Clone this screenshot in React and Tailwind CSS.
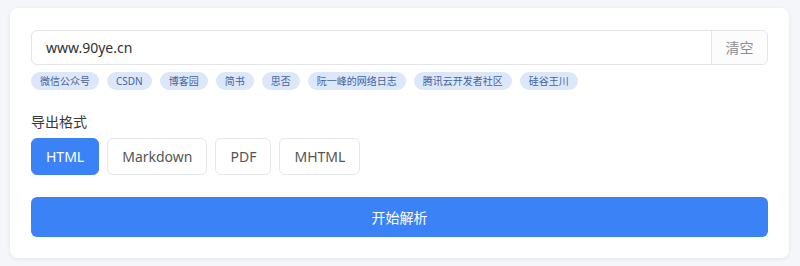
const TAGS = ['微信公众号', 'CSDN', '博客园', '简书', '思否', '阮一峰的网络日志', '腾讯云开发者社区', '硅谷王川']
const FORMATS = ['HTML', 'Markdown', 'PDF', 'MHTML']

export default function App() {
  const font = { fontFamily: '"Noto Sans", "Noto Sans CJK SC", sans-serif' }
  return (
    <div className="min-h-screen bg-[#f4f6f9] pl-[10px] pr-[11px] pt-[8px] pb-[8px]" style={font}>
      <div className="bg-white rounded-lg shadow-[0_1px_4px_rgba(0,0,0,0.08)] px-[21px] pt-[22px] pb-[21px]">
        {/* 地址输入 */}
        <div className="flex h-[35px] border border-[#e2e4e8] rounded-md overflow-hidden">
          <div className="flex-1 flex items-center px-[14px] text-[14px] text-[#303133]">www.90ye.cn</div>
          <button className="w-[56px] border-l border-[#e2e4e8] bg-[#fcfcfc] text-[14px] text-[#8a8e96]">清空</button>
        </div>

        {/* 来源标签 */}
        <div className="mt-[7px] flex flex-wrap gap-[8px]">
          {TAGS.map(t => (
            <span key={t} className="h-[18px] px-[9px] flex items-center rounded-full bg-[#dce8fa] text-[10px] text-[#46639a]">{t}</span>
          ))}
        </div>

        {/* 导出格式 */}
        <div className="mt-[22px] text-[14px] leading-[20px] text-[#3a3a3a]">导出格式</div>
        <div className="mt-[6px] flex gap-[8px]">
          {FORMATS.map((f, i) => (
            <button
              key={f}
              className={i === 0
                ? 'h-[37px] px-[14px] rounded-md bg-[#3b82f6] text-white text-[14px] border border-[#3b82f6]'
                : 'h-[37px] px-[14px] rounded-md bg-white text-[#555] text-[14px] border border-[#e6e7ea]'}
            >
              {f}
            </button>
          ))}
        </div>

        <button className="mt-[22px] w-full h-[40px] rounded-md bg-[#3b82f6] text-white text-[14px]">开始解析</button>
      </div>
    </div>
  )
}
